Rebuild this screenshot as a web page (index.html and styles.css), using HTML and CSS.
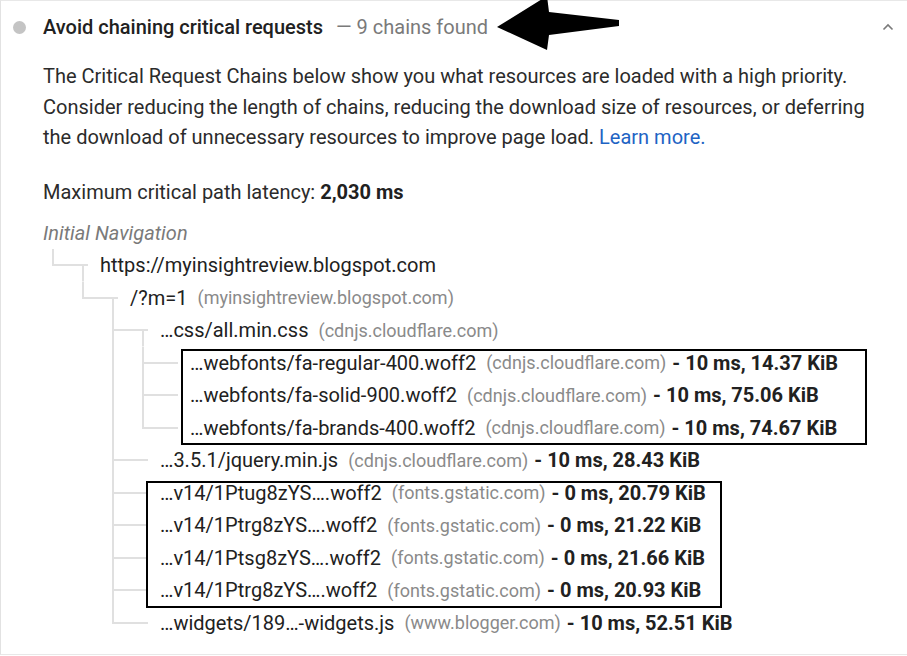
FILE: index.html
```html
<!DOCTYPE html>
<html lang="en">
<head>
<meta charset="utf-8">
<title>Avoid chaining critical requests</title>
<link rel="stylesheet" href="styles.css">
</head>
<body>
<div class="card">
  <div class="header">
    <span class="dot"></span>
    <span class="title">Avoid chaining critical requests</span>
    <span class="summary">— 9 chains found</span>
    <svg class="chevron" width="12" height="8" viewBox="0 0 12 8"><polyline points="1.5,6.5 6,2 10.5,6.5" fill="none" stroke="#7a7a7a" stroke-width="1.6"/></svg>
    <svg class="arrow" width="140" height="52" viewBox="0 0 140 52"><polygon points="6,27 56,-4 58,12 128,20 128,26 58,35 56,50" fill="#000"/></svg>
  </div>
  <div class="body">
    <p class="desc">The Critical Request Chains below show you what resources are loaded with a high priority. Consider reducing the length of chains, reducing the download size of resources, or deferring the download of unnecessary resources to improve page load. <a class="link" href="#">Learn more.</a></p>
    <p class="latency">Maximum critical path latency: <b>2,030 ms</b></p>
    <div class="tree">
      <div class="row"><span class="root">Initial Navigation</span></div>
      <div class="row"><span class="m ur"></span><span class="m end hd"></span><span class="url">https://myinsightreview.blogspot.com</span></div>
      <div class="row"><span class="m"></span><span class="m ur"></span><span class="m end hd"></span><span class="url">/?m=1</span><span class="host">(myinsightreview.blogspot.com)</span></div>
      <div class="row"><span class="m"></span><span class="m"></span><span class="m vr"></span><span class="m end hd"></span><span class="url">…css/all.min.css</span><span class="host">(cdnjs.cloudflare.com)</span></div>
      <div class="group">
        <div class="row"><span class="m"></span><span class="m"></span><span class="m vert"></span><span class="m vr"></span><span class="m end r"></span><span class="url">…webfonts/fa-regular-400.woff2</span><span class="host">(cdnjs.cloudflare.com)</span><span class="dur">- 10 ms, 14.37 KiB</span></div>
        <div class="row"><span class="m"></span><span class="m"></span><span class="m vert"></span><span class="m vr"></span><span class="m end r"></span><span class="url">…webfonts/fa-solid-900.woff2</span><span class="host">(cdnjs.cloudflare.com)</span><span class="dur">- 10 ms, 75.06 KiB</span></div>
        <div class="row"><span class="m"></span><span class="m"></span><span class="m vert"></span><span class="m ur"></span><span class="m end r"></span><span class="url">…webfonts/fa-brands-400.woff2</span><span class="host">(cdnjs.cloudflare.com)</span><span class="dur">- 10 ms, 74.67 KiB</span></div>
        <div class="box box-a"></div>
      </div>
      <div class="row"><span class="m"></span><span class="m"></span><span class="m vr"></span><span class="m end r"></span><span class="url">…3.5.1/jquery.min.js</span><span class="host">(cdnjs.cloudflare.com)</span><span class="dur">- 10 ms, 28.43 KiB</span></div>
      <div class="group">
        <div class="row"><span class="m"></span><span class="m"></span><span class="m vr"></span><span class="m end r"></span><span class="url">…v14/1Ptug8zYS….woff2</span><span class="host">(fonts.gstatic.com)</span><span class="dur">- 0 ms, 20.79 KiB</span></div>
        <div class="row"><span class="m"></span><span class="m"></span><span class="m vr"></span><span class="m end r"></span><span class="url">…v14/1Ptrg8zYS….woff2</span><span class="host">(fonts.gstatic.com)</span><span class="dur">- 0 ms, 21.22 KiB</span></div>
        <div class="row"><span class="m"></span><span class="m"></span><span class="m vr"></span><span class="m end r"></span><span class="url">…v14/1Ptsg8zYS….woff2</span><span class="host">(fonts.gstatic.com)</span><span class="dur">- 0 ms, 21.66 KiB</span></div>
        <div class="row"><span class="m"></span><span class="m"></span><span class="m vr"></span><span class="m end r"></span><span class="url">…v14/1Ptrg8zYS….woff2</span><span class="host">(fonts.gstatic.com)</span><span class="dur">- 0 ms, 20.93 KiB</span></div>
        <div class="box box-b"></div>
      </div>
      <div class="row"><span class="m"></span><span class="m"></span><span class="m ur"></span><span class="m end r"></span><span class="url">…widgets/189…-widgets.js</span><span class="host">(www.blogger.com)</span><span class="dur">- 10 ms, 52.51 KiB</span></div>
    </div>
  </div>
</div>
</body>
</html>
```

FILE: styles.css
```css
* { box-sizing: border-box; }
html, body { margin: 0; padding: 0; background: #fff; }
body {
  font-family: Roboto, "Noto Sans", sans-serif;
  color: #212121;
  width: 907px;
  height: 656px;
  overflow: hidden;
}
.card {
  border-top: 1px solid #e8e8e8;
  border-left: 1px solid #e2e2e2;
  border-bottom: 1px solid #e8e8e8;
  height: 655px;
}
.header {
  position: relative;
  display: flex;
  align-items: center;
  height: 52px;
  padding-left: 12px;
  padding-right: 13px;
}
.dot {
  width: 13px;
  height: 13px;
  border-radius: 50%;
  background: #c4c4c4;
  flex: none;
}
.title {
  margin-left: 17px;
  font-size: 20px;
  font-weight: 500;
  color: #212121;
}
.summary {
  margin-left: 13px;
  font-size: 20px;
  color: #7a7a7a;
}
.chevron {
  margin-left: auto;
  flex: none;
}
.arrow {
  position: absolute;
  left: 490px;
  top: -1px;
}
.body {
  padding-left: 42px;
  padding-right: 20px;
}
.desc {
  margin: 8px 0 0;
  font-size: 20px;
  line-height: 30.5px;
  color: #2b2b2b;
}
.link { color: #1e63c4; text-decoration: none; }
.latency {
  margin: 24px 0 0;
  font-size: 20px;
  line-height: 30px;
  color: #2b2b2b;
}
.latency b { font-weight: 700; color: #212121; }
.tree {
  margin-top: 10px;
  font-size: 20px;
}
.group { position: relative; }
.row {
  display: flex;
  align-items: center;
  height: 32.5px;
  white-space: nowrap;
}
.root { font-style: italic; color: #7a7a7a; }
.m {
  flex: none;
  width: 30px;
  height: 100%;
  background-repeat: no-repeat;
}
.m.end { width: 27px; }
.vert {
  background-image: linear-gradient(#e0e0e0, #e0e0e0);
  background-position: 9px 0;
  background-size: 2px 100%;
}
.vr {
  background-image: linear-gradient(#e0e0e0, #e0e0e0), linear-gradient(#e0e0e0, #e0e0e0);
  background-position: 9px 0, 9px 50%;
  background-size: 2px 100%, 21px 2px;
}
.ur {
  background-image: linear-gradient(#e0e0e0, #e0e0e0), linear-gradient(#e0e0e0, #e0e0e0);
  background-position: 9px 0, 9px 50%;
  background-size: 2px 50%, 21px 2px;
}
.r {
  background-image: linear-gradient(#e0e0e0, #e0e0e0);
  background-position: 0 50%;
  background-size: 15px 2px;
}
.hd {
  background-image: linear-gradient(#e0e0e0, #e0e0e0), linear-gradient(#e0e0e0, #e0e0e0);
  background-position: 0 50%, 9px 100%;
  background-size: 15px 2px, 2px 50%;
}
.url { color: #212121; }
.host {
  margin-left: 10px;
  font-size: 18px;
  color: #8a8a8a;
}
.dur {
  margin-left: 6px;
  font-weight: 700;
  color: #212121;
}
.box {
  position: absolute;
  border: 2px solid #000;
}
.box-a { left: 138px; width: 686px; top: 2px; bottom: -1px; }
.box-b { left: 103px; width: 576px; top: 4px; bottom: -1px; }
```
